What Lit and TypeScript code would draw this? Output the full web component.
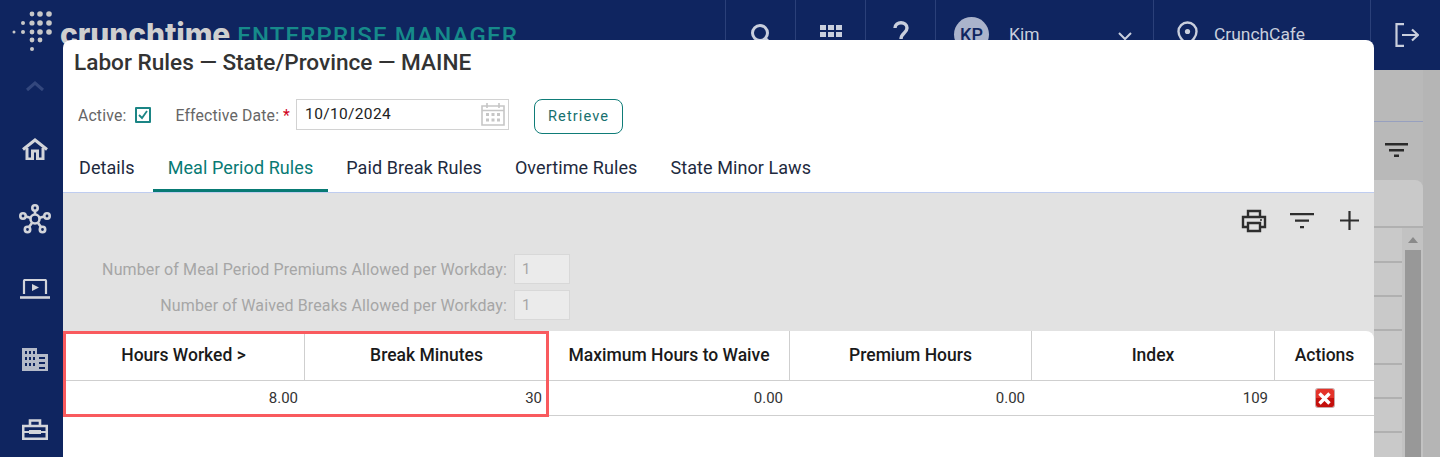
import { LitElement, html, css, svg } from "lit";
import { customElement } from "lit/decorators.js";

const dots: [number, number, number][] = [
  [32, 14, 2.4], [40, 14, 2.8], [49, 14, 2.8],
  [23, 23, 2], [32, 23, 2.6], [40, 23, 2.8], [49, 23, 2.8],
  [14, 32, 1.5], [23, 32, 2], [32, 32, 2.4], [40, 32, 2.8], [49, 32, 2.8],
  [32, 40, 2.4], [40, 40, 2.4],
  [32, 49, 2],
];

const columns = [
  { label: "Hours Worked >", value: "8.00", width: 242 },
  { label: "Break Minutes", value: "30", width: 244 },
  { label: "Maximum Hours to Waive", value: "0.00", width: 241 },
  { label: "Premium Hours", value: "0.00", width: 242 },
  { label: "Index", value: "109", width: 243 },
];

@customElement("app-root")
export class AppRoot extends LitElement {
  static styles = css`
    :host { display: block; width: 1440px; height: 457px; overflow: hidden; position: relative; font-family: Roboto, "Liberation Sans", sans-serif; background: #b5b5b5; }
    .top { height: 70px; background: #0f2560; display: flex; justify-content: space-between; }
    .brand { display: flex; position: relative; width: 724px; }
    .logo { position: absolute; left: 0; top: 0; }
    .wordmark { margin: 14px 0 0 60px; font: 800 30px/40px Inter, sans-serif; color: #cfcfcf; letter-spacing: -0.1px; }
    .product { margin: 16px 0 0 7px; font: 500 24px/40px Roboto, sans-serif; color: #168a8a; letter-spacing: 1.15px; white-space: nowrap; }
    .topnav { display: flex; height: 70px; }
    .cell { border-left: 1px solid #2b4079; display: flex; align-items: center; justify-content: center; color: #c9cfdd; font-size: 17.4px; padding-bottom: 2px; box-sizing: border-box; }
    .c70 { width: 70px; }
    .user { width: 218px; justify-content: flex-start; padding-left: 18px; }
    .avatar { width: 35px; height: 35px; border-radius: 50%; background: #aab3cb; color: #0f2560; display: flex; align-items: center; justify-content: center; font-size: 18px; font-weight: 500; }
    .kim { margin-left: 20px; flex: 1; }
    .chev { margin-right: 21px; margin-top: 5px; }
    .site { width: 217px; justify-content: flex-start; padding-left: 23px; gap: 16px; }
    .logout { width: 70px; padding: 0 0 0 2px; }

    .body { display: flex; height: 387px; }
    .side { width: 63px; background: #0f2560; display: flex; flex-direction: column; align-items: center; padding-left: 7px; box-sizing: border-box; }
    .side svg { display: block; flex: none; }
    .up { margin: 10px 0 22px; }
    .ico { height: 70px; flex: none; display: flex; justify-content: center; align-items: center; }
    .behind { flex: 1; display: flex; justify-content: flex-end; }
    .behind-col { width: 66px; display: flex; }
    .panel { width: 49px; height: 387px; display: flex; flex-direction: column; padding-top: 51px; box-sizing: border-box; background: #b9b9b9; }
    .panel-head { height: 59px; flex: none; border-top: 1px solid #97a0bf; box-sizing: border-box; padding: 21px 0 0 11px; }
    .panel-head svg { display: block; }
    .card { height: 48px; background: #c9c9c9; border-radius: 0 8px 0 0; border-bottom: 2px solid #b0b0b0; box-sizing: border-box; flex: none; }
    .lower { flex: 1; min-height: 0; overflow: hidden; display: flex; background: #c9c9c9; }
    .rows { flex: 1; padding-top: 1px; }
    .rows i { display: block; height: 34px; border-bottom: 2px solid #b0b0b0; box-sizing: border-box; }
    .track { width: 21px; background: #c2c2c2; display: flex; flex-direction: column; align-items: center; padding-top: 9px; box-sizing: border-box; }
    .thumb { width: 16px; flex: 1; background: #989898; margin-top: 7px; }

    .modal { position: absolute; left: 63px; top: 40px; width: 1311px; height: 417px; background: #fff; border-radius: 8px 8px 0 0; display: flex; flex-direction: column; }
    h1 { margin: 0; padding: 10px 0 0 11px; font-size: 22.6px; line-height: 26px; font-weight: 500; color: #333; height: 44px; box-sizing: border-box; }
    .form { display: flex; align-items: center; height: 42px; padding: 0 0 2px 15px; box-sizing: border-box; margin-top: 11px; font-size: 15.8px; color: #666; letter-spacing: 0.15px; }
    .check { width: 12px; height: 12px; border: 2px solid #1b8585; margin-left: 9px; border-radius: 1px; display: flex; }
    .eff { margin-left: 24px; }
    .req { color: #d0021b; margin-left: 4px; }
    .date { width: 213px; height: 31px; border: 1px solid #d2d2d2; box-sizing: border-box; margin-left: 6px; display: flex; align-items: center; justify-content: space-between; padding: 0 3px 0 8px; color: #222; font-size: 15.5px; letter-spacing: 0.35px; margin-top: -2px; }
    .retrieve { width: 89px; height: 35px; border: 1.5px solid #0f7c78; border-radius: 8px; background: #fff; margin: 2px 0 0 25px; color: #17706e; font: 14.6px Roboto, sans-serif; letter-spacing: 1.1px; padding: 0; }
    .tabs { display: flex; height: 46px; margin-top: 9px; padding-left: 1px; border-bottom: 1px solid #bfcdf0; box-sizing: content-box; }
    .tab { padding: 0 15px; font-size: 18px; letter-spacing: 0.08px; line-height: 44px; color: #1e2a3e; margin-right: 3px; height: 46px; box-sizing: border-box; }
    .tab.active { color: #087a74; border-bottom: 3px solid #087a74; }
    .gray { background: #e2e2e2; height: 146px; margin-bottom: -8px; display: flex; flex-direction: column; }
    .tools { display: flex; justify-content: flex-end; align-items: center; padding: 14px 15px 0 0; height: 27px; }
    .tools .f { margin: 0 26px 0 23px; }
    .fields { display: grid; grid-template-columns: 444px 56px; column-gap: 7px; row-gap: 6px; margin-top: 20px; align-items: center; }
    .fields label { text-align: right; color: #a6a6a6; font-size: 16px; letter-spacing: 0.12px; }
    .fields div { height: 30px; box-sizing: border-box; border: 1px solid #d8d8d8; background: #ebebeb; color: #a6a6a6; font-size: 15px; padding: 5px 0 0 7px; }

    .table { position: relative; display: flex; flex-direction: column; }
    .head, .row { display: flex; border-bottom: 1px solid #cfcfcf; background: #fff; }
    .head { height: 50px; border-radius: 0 8px 0 0; box-sizing: border-box; }
    .row { height: 35px; box-sizing: border-box; }
    .th { border-right: 1px solid #cfcfcf; box-sizing: border-box; font-size: 17.5px; font-weight: 500; color: #1a1a1a; text-align: center; line-height: 48px; }
    .td { box-sizing: border-box; text-align: right; font-size: 15px; color: #333; line-height: 35px; padding-right: 7px; }
    .th.last { border-right: 0; flex: 1; }
    .td.last { flex: 1; display: flex; justify-content: center; align-items: center; padding: 0; }
    .del { width: 18px; height: 18px; border-radius: 2px; background: linear-gradient(#e4332a 50%, #c40f0c 50%); box-shadow: 0 0 0 1px #c9a9a9; display: flex; align-items: center; justify-content: center; }
    .mark { position: absolute; left: 0; top: 0; width: 486px; height: 86px; box-sizing: border-box; border: 3px solid #f95a5e; }
  `;

  render() {
    return html`
      <div class="top">
        <div class="brand">
          <svg class="logo" width="60" height="60" viewBox="0 0 60 60" fill="#c8c8c8">
            ${dots.map(([x, y, r]) => svg`<circle cx=${x} cy=${y} r=${r}></circle>`)}
          </svg>
          <div class="wordmark">crunchtime</div>
          <div class="product">ENTERPRISE MANAGER</div>
        </div>
        <div class="topnav">
          <div class="cell c70"><svg width="22" height="22" viewBox="0 0 22 22" fill="none" stroke="#c9cfdd" stroke-width="3"><circle cx="10" cy="10" r="7.500"></circle><path d="M15 15l6 6"></path></svg></div>
          <div class="cell c70"><svg width="22" height="18" viewBox="0 0 22 18" fill="#c9cfdd"><path d="M0 0h6v5H0zM8 0h6v5H8zM16 0h6v5h-6zM0 7h6v5H0zM8 7h6v5H8zM16 7h6v5h-6z"></path></svg></div>
          <div class="cell c70"><svg width="16" height="26" viewBox="0 0 16 26" fill="none" stroke="#c9cfdd" stroke-width="3.400"><path d="M2 7c0-7 12-7 12 0 0 5-6 5-6 11"></path><path d="M8 21v4"></path></svg></div>
          <div class="cell user">
            <div class="avatar">KP</div>
            <span class="kim">Kim</span>
            <svg class="chev" width="14" height="9" viewBox="0 0 14 9" fill="none" stroke="#c9cfdd" stroke-width="2"><path d="M1 1l6 6 6-6"></path></svg>
          </div>
          <div class="cell site">
            <svg width="21" height="26" viewBox="0 0 21 26" fill="none" stroke="#c9cfdd" stroke-width="2.400"><path d="M10.500 24.500C5 19 1.500 15.500 1.500 10.500a9 9 0 0118 0c0 5-3.500 8.500-9 14z"></path><circle cx="10.500" cy="10.500" r="2.600" fill="#c9cfdd" stroke="none"></circle></svg>
            <span>CrunchCafe</span>
          </div>
          <div class="cell logout"><svg width="24" height="24" viewBox="0 0 24 24" fill="none" stroke="#c9cfdd" stroke-width="2.200"><path d="M9 1.100H1.500v21.800H9"></path><path d="M7 12h16M17 6.500l6 5.500-6 5.500"></path></svg></div>
        </div>
      </div>
      <div class="body">
        <div class="side">
          <svg class="up" width="20" height="12" viewBox="0 0 20 12" fill="none" stroke="#33477d" stroke-width="3"><path d="M2 10l8-7 8 7"></path></svg>
          <div class="ico"><svg width="26" height="22" viewBox="0 0 26 22" fill="none" stroke="#d2d4da" stroke-width="3"><path d="M1 11.500L13 2l12 9.500"></path><path d="M5 10v11h5.500v-8h5v8H21V10"></path></svg></div>
          <div class="ico"><svg width="32" height="30" viewBox="0 0 32 30" fill="none" stroke="#d2d4da" stroke-width="2.600"><circle cx="16" cy="15" r="4.500"></circle><circle cx="16" cy="4" r="2.700"></circle><circle cx="4" cy="12" r="2.700"></circle><circle cx="28" cy="12" r="2.700"></circle><circle cx="8.500" cy="25.500" r="2.700"></circle><circle cx="23.500" cy="25.500" r="2.700"></circle><path d="M16 7v4M7 12.500l5 1.500M25 12.500l-5 1.500M10 23l3.300-4.500M22 23l-3.300-4.500"></path></svg></div>
          <div class="ico"><svg width="30" height="20" viewBox="0 0 30 20" fill="none" stroke="#d2d4da" stroke-width="2.200"><path d="M4 15V2a1 1 0 011-1h20a1 1 0 011 1v13"></path><path d="M0 18.500h30" stroke-width="2.600"></path><path d="M12 5l7 3.500-7 3.500z" fill="#d2d4da" stroke="none"></path></svg></div>
          <div class="ico"><svg width="26" height="23" viewBox="0 0 26 23" fill="#b4bac8"><path d="M0 0h15v6h11v17H0z"></path><path fill="#0f2560" d="M3 3h2v3H3zM7 3h2v3H7zM11 3h2v3h-2zM3 9h2v3H3zM7 9h2v3H7zM11 9h2v3h-2zM3 15h2v3H3zM7 15h2v3H7zM11 15h2v3h-2zM17 9h6v2h-6zM17 14h6v2h-6zM17 19h6v2h-6z"></path></svg></div>
          <div class="ico"><svg width="26" height="21" viewBox="0 0 26 21" fill="none" stroke="#d2d4da" stroke-width="2.600"><path d="M1.200 7h23.600v12.800H1.200z"></path><path d="M8 7V1.500h10V7"></path><path d="M1 13h7M18 13h7M8 12h10v2H8z" stroke-width="2"></path></svg></div>
        </div>
        <div class="behind">
          <div class="behind-col">
            <div class="panel">
              <div class="panel-head"><svg width="23" height="14" viewBox="0 0 23 14" fill="#2a2a2a"><path d="M0 0h23v2.400H0zM4 6h15v2.400H4zM9 11.600h5V14H9z"></path></svg></div>
              <div class="card"></div>
              <div class="lower">
                <div class="rows">${Array.from({ length: 6 }, () => html`<i></i>`)}</div>
                <div class="track">
                  <svg width="10" height="6" viewBox="0 0 10 6" fill="#8a8a8a"><path d="M5 0l5 6H0z"></path></svg>
                  <div class="thumb"></div>
                </div>
              </div>
            </div>
          </div>
        </div>
      </div>

      <div class="modal">
        <h1>Labor Rules — State/Province — MAINE</h1>
        <div class="form">
          <span>Active:</span>
          <span class="check"><svg width="12" height="12" viewBox="0 0 12 12" fill="none" stroke="#1b8585" stroke-width="1.800"><path d="M2 6l3 3 5-7"></path></svg></span>
          <span class="eff">Effective Date:</span><span class="req">*</span>
          <div class="date">
            <span>10/10/2024</span>
            <svg width="24" height="24" viewBox="0 0 24 24" fill="none" stroke="#c6c6c6" stroke-width="1.600"><path d="M1 4h22v19H1zM1 8.500h22M6 1v5M18 1v5"></path><path fill="#c6c6c6" stroke="none" d="M5 11h3v3H5zM10.500 11h3v3h-3zM16 11h3v3h-3zM5 16.500h3v3H5zM10.500 16.500h3v3h-3zM16 16.500h3v3h-3z"></path></svg>
          </div>
          <button class="retrieve">Retrieve</button>
        </div>
        <div class="tabs">
          <div class="tab">Details</div>
          <div class="tab active">Meal Period Rules</div>
          <div class="tab">Paid Break Rules</div>
          <div class="tab">Overtime Rules</div>
          <div class="tab">State Minor Laws</div>
        </div>
        <div class="gray">
          <div class="tools">
            <svg width="26" height="24" viewBox="0 0 26 24" fill="none" stroke="#2e2e2e" stroke-width="2.400"><path d="M7 7V2h12v5M7 18H2V8h22v10h-5"></path><path d="M7 14h12v8H7z"></path><circle cx="20" cy="11" r="1" fill="#2e2e2e" stroke="none"></circle></svg>
            <svg class="f" width="24" height="16" viewBox="0 0 24 16" fill="#2e2e2e"><path d="M0 0h24v2.200H0zM5 6.500h14v2.200H5zM10 13h4v2.200h-4z"></path></svg>
            <svg width="19" height="19" viewBox="0 0 19 19" fill="none" stroke="#2e2e2e" stroke-width="2.200"><path d="M9.500 0v19M0 9.500h19"></path></svg>
          </div>
          <div class="fields">
            <label>Number of Meal Period Premiums Allowed per Workday:</label><div>1</div>
            <label>Number of Waived Breaks Allowed per Workday:</label><div>1</div>
          </div>
        </div>
        <div class="table">
          <div class="head">
            ${columns.map((c) => html`<div class="th" style="width:${c.width}px">${c.label}</div>`)}
            <div class="th last">Actions</div>
          </div>
          <div class="row">
            ${columns.map((c) => html`<div class="td" style="width:${c.width}px">${c.value}</div>`)}
            <div class="td last"><span class="del"><svg width="13" height="13" viewBox="0 0 13 13" fill="none" stroke="#fff" stroke-width="3.400"><path d="M1.500 1.500l10 10M11.500 1.500l-10 10"></path></svg></span></div>
          </div>
          <div class="mark"></div>
        </div>
      </div>
    `;
  }
}
